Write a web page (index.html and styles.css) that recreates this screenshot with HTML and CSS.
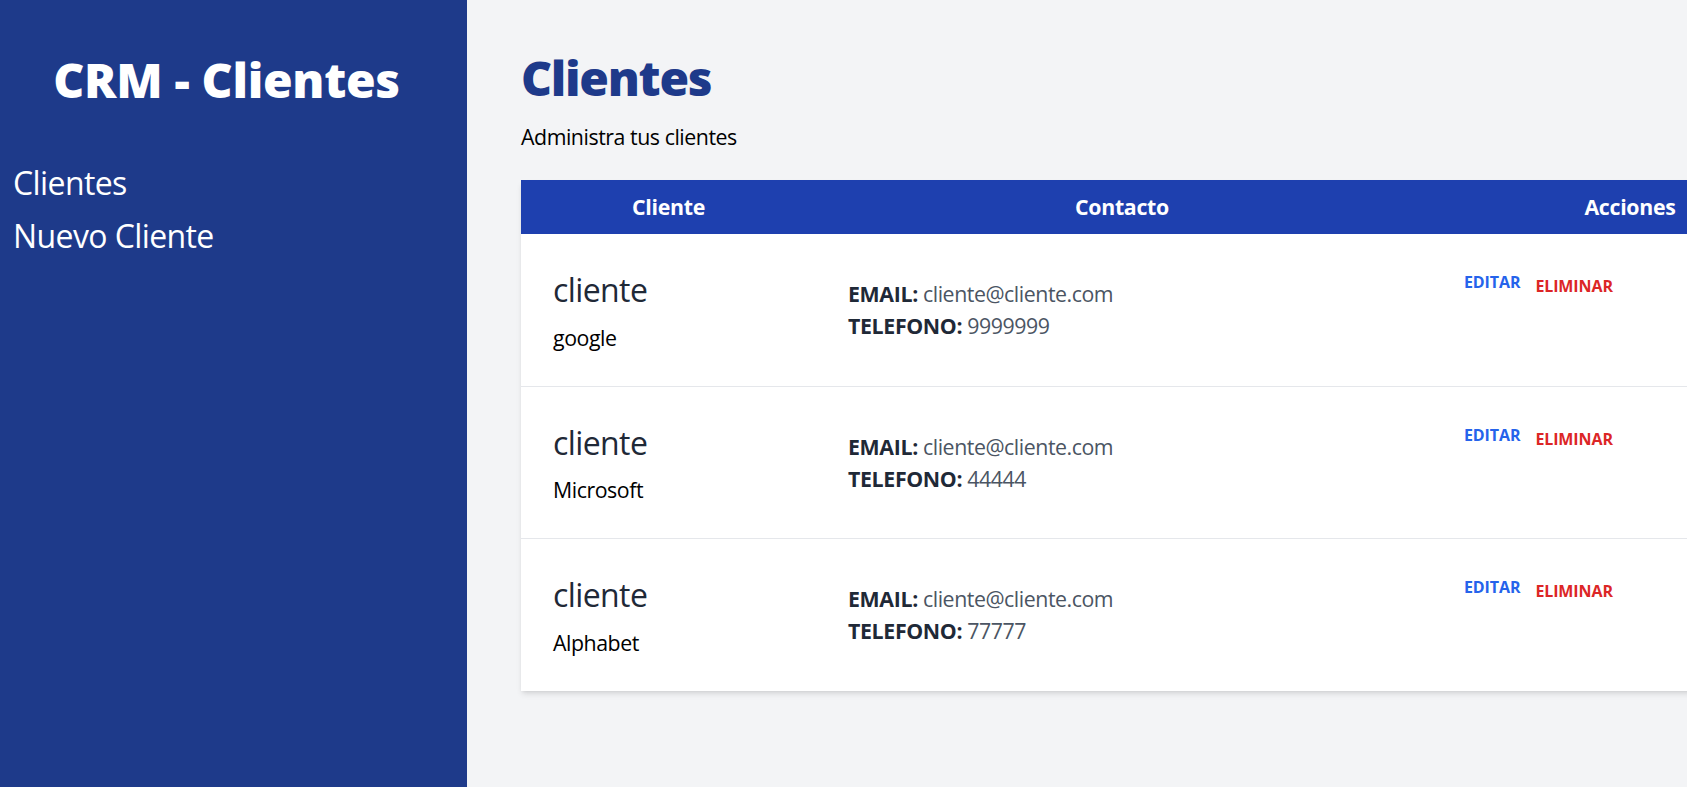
FILE: index.html
```html
<!DOCTYPE html>
<html lang="es">
<head>
<meta charset="utf-8">
<title>CRM - Clientes</title>
<link rel="stylesheet" href="styles.css">
</head>
<body>
<div class="layout">
  <aside class="sidebar">
    <h2 class="brand">CRM - Clientes</h2>
    <nav class="nav">
      <a class="nav-link" href="#">Clientes</a>
      <a class="nav-link" href="#">Nuevo Cliente</a>
    </nav>
  </aside>
  <main class="main">
    <h1 class="page-title">Clientes</h1>
    <p class="page-sub">Administra tus clientes</p>
    <table class="clients">
      <colgroup>
        <col class="col-a">
        <col class="col-b">
        <col class="col-c">
      </colgroup>
      <thead>
        <tr>
          <th>Cliente</th>
          <th>Contacto</th>
          <th>Acciones</th>
        </tr>
      </thead>
      <tbody>
        <tr>
          <td class="cell-client"><p class="c-name">cliente</p><p class="c-company">google</p></td>
          <td class="cell-contact"><p class="c-line"><span class="c-label">EMAIL:</span> cliente@cliente.com</p><p class="c-line"><span class="c-label">TELEFONO:</span> 9999999</p></td>
          <td class="cell-actions"><div class="actions"><a class="btn-edit" href="#">EDITAR</a><button class="btn-del" type="button">ELIMINAR</button></div></td>
        </tr>
        <tr>
          <td class="cell-client"><p class="c-name">cliente</p><p class="c-company">Microsoft</p></td>
          <td class="cell-contact"><p class="c-line"><span class="c-label">EMAIL:</span> cliente@cliente.com</p><p class="c-line"><span class="c-label">TELEFONO:</span> 44444</p></td>
          <td class="cell-actions"><div class="actions"><a class="btn-edit" href="#">EDITAR</a><button class="btn-del" type="button">ELIMINAR</button></div></td>
        </tr>
        <tr>
          <td class="cell-client"><p class="c-name">cliente</p><p class="c-company">Alphabet</p></td>
          <td class="cell-contact"><p class="c-line"><span class="c-label">EMAIL:</span> cliente@cliente.com</p><p class="c-line"><span class="c-label">TELEFONO:</span> 77777</p></td>
          <td class="cell-actions"><div class="actions"><a class="btn-edit" href="#">EDITAR</a><button class="btn-del" type="button">ELIMINAR</button></div></td>
        </tr>
      </tbody>
    </table>
  </main>
</div>
</body>
</html>
```
FILE: styles.css
```css
html, body {
  margin: 0;
  padding: 0;
  overflow: hidden;
}
body {
  font-family: "Open Sans", "Noto Sans", sans-serif;
  font-size: 21.33px;
  line-height: 32px;
  letter-spacing: -0.45px;
  color: #000;
  background: #f3f4f6;
}
.layout {
  display: flex;
  min-height: 787px;
}
.sidebar {
  width: 467px;
  flex: 0 0 467px;
  background: #1e3a8a;
  padding: 56px 27px 0 13px;
  box-sizing: border-box;
}
.brand {
  margin: 0;
  text-align: center;
  color: #fff;
  font-size: 48px;
  line-height: 48px;
  font-weight: 800;
  letter-spacing: -0.3px;
}
.nav {
  display: flex;
  flex-direction: column;
  gap: 10.5px;
  margin-top: 58px;
}
.nav-link {
  color: #fff;
  text-decoration: none;
  font-size: 32px;
  line-height: 42.7px;
  letter-spacing: -0.6px;
}
.main {
  flex: 1;
  min-width: 0;
  padding: 54px 0 0 54px;
  background: #f3f4f6;
}
.page-title {
  margin: 0;
  color: #1e3a8a;
  font-size: 48px;
  line-height: 48px;
  font-weight: 800;
  letter-spacing: -1.3px;
}
.page-sub {
  margin: 19px 0 0 0;
}
.clients {
  margin-top: 27px;
  width: 1311px;
  table-layout: fixed;
  border-collapse: collapse;
  background: #fff;
  box-shadow: 0 4px 6px -1px rgba(0,0,0,0.1), 0 2px 4px -2px rgba(0,0,0,0.1);
}
.col-a { width: 295px; }
.col-b { width: 612px; }
.col-c { width: 404px; }
.clients thead tr {
  background: #1e40af;
}
.clients th {
  color: #fff;
  font-weight: 700;
  padding: 11px 0;
  height: 32px;
  text-align: center;
  letter-spacing: -0.3px;
}
.clients td {
  vertical-align: top;
  padding: 32px;
}
.clients tbody tr + tr td {
  border-top: 1px solid #e5e7eb;
}
.cell-client {
  padding-top: 35px !important;
  padding-bottom: 32px !important;
}
.c-name {
  margin: 0;
  font-size: 32px;
  line-height: 42.7px;
  color: #1f2937;
  letter-spacing: -0.6px;
}
.c-company {
  margin: 10px 0 0 0;
}
.cell-contact {
  padding-top: 44px !important;
}
.c-line {
  margin: 0;
  color: #4b5563;
}
.c-label {
  font-weight: 700;
  color: #1f2937;
  letter-spacing: -0.35px;
}
.cell-actions {
  padding-left: 36px !important;
}
.actions {
  display: flex;
  align-items: flex-start;
  gap: 15px;
  padding-top: 6px;
}
.btn-edit {
  color: #2563eb;
  font-weight: 700;
  font-size: 16px;
  line-height: 21.3px;
  text-decoration: none;
  letter-spacing: -0.1px;
}
.btn-del {
  color: #dc2626;
  font-weight: 700;
  font-size: 16px;
  line-height: 21.3px;
  font-family: inherit;
  letter-spacing: -0.1px;
  background: none;
  border: 0;
  padding: 0;
  margin-top: 4px;
  cursor: pointer;
}
```
